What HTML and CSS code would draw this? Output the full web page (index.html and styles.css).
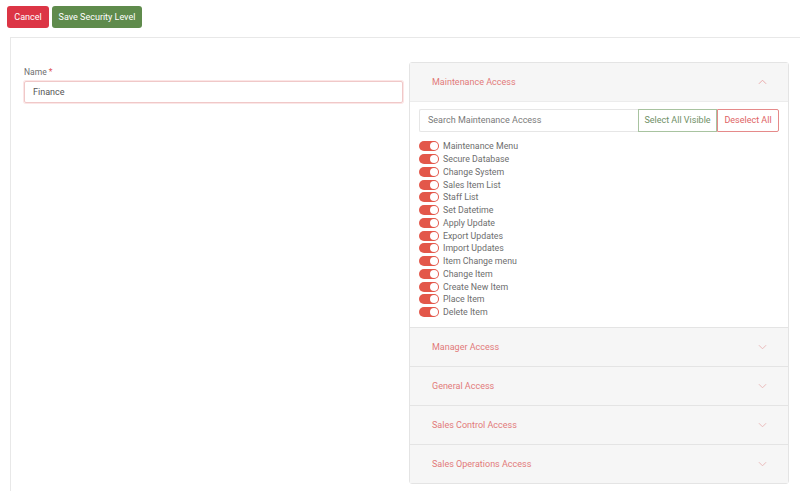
FILE: index.html
```html
<!DOCTYPE html>
<html>
<head>
<meta charset="utf-8">
<link rel="stylesheet" href="styles.css">
</head>
<body>
<div class="toolbar">
  <button class="btn btn-cancel">Cancel</button>
  <button class="btn btn-save">Save Security Level</button>
</div>
<div class="card">
  <div class="left">
    <label class="label">Name <span class="req">*</span></label>
    <div class="input">Finance</div>
  </div>
  <div class="accordion">
    <div class="acc-item open">
      <div class="acc-head">
        <span>Maintenance Access</span>
        <svg class="chev" viewBox="0 0 10 6" width="9" height="6"><path d="M1 5 L5 1 L9 5" fill="none" stroke="#e8a3a3" stroke-width="1"/></svg>
      </div>
      <div class="acc-body">
        <div class="search-row">
          <div class="search">Search Maintenance Access</div>
          <div class="sbtn sel">Select All Visible</div>
          <div class="sbtn desel">Deselect All</div>
        </div>
        <ul class="toggles">
          <li><span class="tg"></span>Maintenance Menu</li>
          <li><span class="tg"></span>Secure Database</li>
          <li><span class="tg"></span>Change System</li>
          <li><span class="tg"></span>Sales Item List</li>
          <li><span class="tg"></span>Staff List</li>
          <li><span class="tg"></span>Set Datetime</li>
          <li><span class="tg"></span>Apply Update</li>
          <li><span class="tg"></span>Export Updates</li>
          <li><span class="tg"></span>Import Updates</li>
          <li><span class="tg"></span>Item Change menu</li>
          <li><span class="tg"></span>Change Item</li>
          <li><span class="tg"></span>Create New Item</li>
          <li><span class="tg"></span>Place Item</li>
          <li><span class="tg"></span>Delete Item</li>
        </ul>
      </div>
    </div>
    <div class="acc-item">
      <div class="acc-head"><span>Manager Access</span><svg class="chev" viewBox="0 0 10 6" width="9" height="6"><path d="M1 1 L5 5 L9 1" fill="none" stroke="#e8b3b3" stroke-width="1"/></svg></div>
    </div>
    <div class="acc-item">
      <div class="acc-head"><span>General Access</span><svg class="chev" viewBox="0 0 10 6" width="9" height="6"><path d="M1 1 L5 5 L9 1" fill="none" stroke="#e8b3b3" stroke-width="1"/></svg></div>
    </div>
    <div class="acc-item">
      <div class="acc-head"><span>Sales Control Access</span><svg class="chev" viewBox="0 0 10 6" width="9" height="6"><path d="M1 1 L5 5 L9 1" fill="none" stroke="#e8b3b3" stroke-width="1"/></svg></div>
    </div>
    <div class="acc-item">
      <div class="acc-head"><span>Sales Operations Access</span><svg class="chev" viewBox="0 0 10 6" width="9" height="6"><path d="M1 1 L5 5 L9 1" fill="none" stroke="#e8b3b3" stroke-width="1"/></svg></div>
    </div>
  </div>
</div>
</body>
</html>
```

FILE: styles.css
```css
html, body {
  margin: 0;
  padding: 0;
  overflow: hidden;
  background: #fff;
}
body {
  font-family: Roboto, "Liberation Sans", sans-serif;
  font-size: 9px;
  color: #6e6e6e;
  height: 491px;
  width: 800px;
}
.toolbar {
  display: flex;
  gap: 3px;
  padding: 6px 0 0 7px;
  height: 31px;
  box-sizing: border-box;
}
.btn {
  border: none;
  border-radius: 3px;
  color: #fff;
  font-family: Roboto, "Liberation Sans", sans-serif;
  font-size: 9px;
  font-weight: 400;
  height: 22px;
  padding: 0;
  margin: 0;
}
.btn-cancel { background: #dc3545; width: 42px; }
.btn-save { background: #5f8b4c; width: 90px; }
.card {
  margin: 6px 0 0 10px;
  width: 792px;
  border: 1px solid #e8e8e8;
  box-sizing: border-box;
  display: flex;
  gap: 6px;
  padding: 24px 13px 24px 13px;
  height: 470px;
}
.left {
  width: 379px;
  flex: none;
  padding-top: 5px;
}
.label {
  display: block;
  color: #6e6e6e;
  font-size: 8.5px;
  margin-bottom: 4px;
  line-height: 10px;
}
.req { color: #e05555; }
.input {
  height: 22px;
  box-sizing: border-box;
  border: 1px solid #f0c8c8;
  box-shadow: 0 0 0 1px #fbe6e6;
  border-radius: 2px;
  padding: 0 8px;
  line-height: 20px;
  color: #555;
}
.accordion {
  width: 380px;
  box-sizing: border-box;
  flex: none;
  border: 1px solid #e4e4e4;
  border-radius: 3px;
  align-self: flex-start;
}
.acc-item + .acc-item { border-top: 1px solid #e4e4e4; }
.acc-head {
  height: 38px;
  background: #f6f6f6;
  display: flex;
  align-items: center;
  justify-content: space-between;
  padding: 0 21px 0 22px;
  color: #e27a7a;
  font-size: 9px;
}
.open .acc-head { border-bottom: 1px solid #ececec; }
.acc-body {
  background: #fff;
  padding: 7px 9px 8px 9px;
}
.search-row {
  display: flex;
  height: 23px;
}
.search {
  flex: 1;
  border: 1px solid #e6e6e6;
  border-right: none;
  border-radius: 2px 0 0 2px;
  padding: 0 8px;
  line-height: 21px;
  color: #7a7a7a;
}
.sbtn {
  line-height: 21px;
  border: 1px solid;
  white-space: nowrap;
  box-sizing: border-box;
  text-align: center;
}
.sel { border-color: #a8c3a0; color: #6f8f66; width: 79px; }
.desel { border-color: #e58a8a; color: #e06464; border-radius: 0 2px 2px 0; width: 62px; }
.toggles {
  list-style: none;
  margin: 8px 0 0 0;
  padding: 0;
}
.toggles li {
  display: flex;
  align-items: center;
  height: 12.75px;
  color: #6e6e6e;
  font-size: 8.8px;
}
.tg {
  width: 20px;
  height: 10px;
  border-radius: 5px;
  background: #e3574a;
  position: relative;
  margin-right: 4px;
  flex: none;
}
.tg::after {
  content: "";
  position: absolute;
  right: 1px;
  top: 1px;
  width: 8px;
  height: 8px;
  border-radius: 50%;
  background: #fff;
}
```
